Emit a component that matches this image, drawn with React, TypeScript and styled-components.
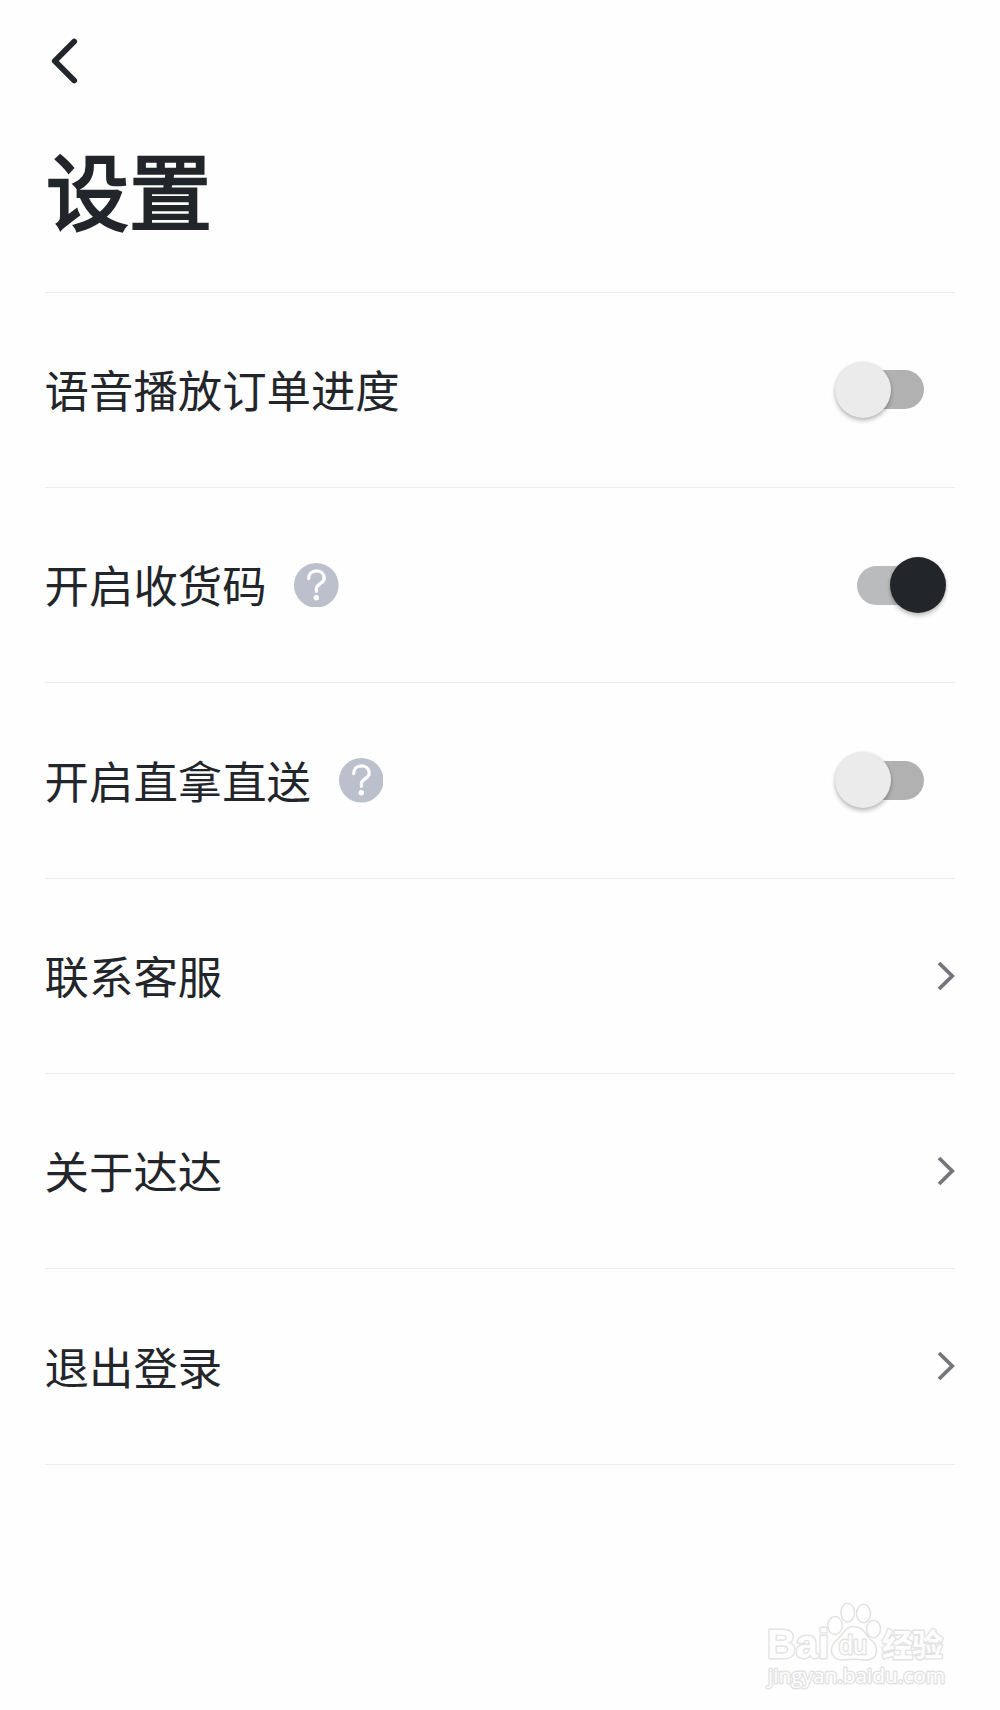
import React, { useState } from "react";
import styled, { createGlobalStyle } from "styled-components";

const GlobalStyle = createGlobalStyle`
  * { box-sizing: border-box; }
  body {
    margin: 0;
    background: #fefefe;
    color: #22252a;
    font-family: "Noto Sans CJK SC", sans-serif;
  }
`;

const Screen = styled.div`
  display: flex;
  flex-direction: column;
  width: 1000px;
  height: 1710px;
  padding: 0 44.6px 0 44.6px;
  overflow: hidden;
`;

const NavBar = styled.header`
  display: flex;
  align-items: center;
  height: 122px;
`;

const BackButton = styled.button`
  display: flex;
  padding: 0 0 0 5.2px;
  border: 0;
  background: none;
`;

const Title = styled.h1`
  margin: 0;
  height: 169.6px;
  padding: 6px 0 0 1.4px;
  font-size: 83px;
  line-height: 120px;
  font-weight: 400;
  -webkit-text-stroke: 2.5px #22252a;
`;

const List = styled.ul`
  list-style: none;
  margin: 0;
  padding: 0;
  border-top: 1px solid #ebebec;
`;

const Row = styled.li`
  display: flex;
  align-items: center;
  height: 195.35px;
  border-bottom: 1px solid #ebebec;
`;

const Label = styled.span`
  padding-bottom: 1.6px;
  font-size: 44.4px;
  line-height: 64px;
`;

const HelpIcon = styled.svg`
  margin-left: 27.6px;
`;

const Trailing = styled.div`
  display: flex;
  margin-left: auto;
`;

const Switch = styled.button`
  display: flex;
  align-items: center;
  justify-content: center;
  position: relative;
  width: 111px;
  height: 56px;
  margin-right: 9.2px;
  padding: 0;
  border: 0;
  background: none;
`;

const Track = styled.span<{ $on: boolean }>`
  width: 67px;
  height: 39px;
  border-radius: 20px;
  background: ${(p) => (p.$on ? "#babbbc" : "#b1b1b1")};
`;

const Knob = styled.span<{ $on: boolean }>`
  position: absolute;
  top: 0;
  left: ${(p) => (p.$on ? "55px" : "0")};
  width: 56px;
  height: 56px;
  border-radius: 50%;
  background: ${(p) => (p.$on ? "#22252a" : "#ebebeb")};
  box-shadow: 0 3px 4px rgba(0, 0, 0, 0.24), 0 0 3px rgba(0, 0, 0, 0.1);
`;

const Footer = styled.footer`
  display: flex;
  justify-content: flex-end;
  margin-top: auto;
`;

const Watermark = styled.svg`
  margin-right: 5.4px;
  fill: #fefefe;
  stroke: #e2e2e2;
  stroke-width: 1.5;
`;

const MarkText = styled.text`
  paint-order: stroke;
  stroke: #e3e3e3;
  stroke-width: 2.8px;
  stroke-linejoin: round;
`;

function Toggle({ initial }: { initial: boolean }) {
  const [on, setOn] = useState(initial);
  return (
    <Switch role="switch" aria-checked={on} onClick={() => setOn(!on)}>
      <Track $on={on} />
      <Knob $on={on} />
    </Switch>
  );
}

function Help() {
  return (
    <HelpIcon width="44.6" height="44.6" viewBox="0 0 44.6 44.6" fill="none">
      <circle cx="22.3" cy="22.3" r="22.3" fill="#bbc0cc" />
      <path
        d="M14.7 15.6C14.7 11 18 7.8 22.5 7.8S30.2 11 30.2 15.4C30.2 20.6 22.4 20.6 22.4 25.6V28.3"
        stroke="#fff"
        strokeWidth="3.2"
        strokeLinecap="round"
      />
      <circle cx="22.3" cy="34.8" r="2.7" fill="#fff" />
    </HelpIcon>
  );
}

function Chevron() {
  return (
    <svg width="20" height="32" viewBox="0 0 20 32" fill="none">
      <path d="M4 3L17.2 16L4 29" stroke="#74767b" strokeWidth="3.8" />
    </svg>
  );
}

interface Item {
  label: string;
  help?: boolean;
  on?: boolean;
}

const items: Item[] = [
  { label: "语音播放订单进度", on: false },
  { label: "开启收货码", help: true, on: true },
  { label: "开启直拿直送", help: true, on: false },
  { label: "联系客服" },
  { label: "关于达达" },
  { label: "退出登录" },
];

export default function App() {
  return (
    <>
      <GlobalStyle />
      <Screen>
        <NavBar>
          <BackButton aria-label="返回">
            <svg width="30" height="50" viewBox="0 0 30 50" fill="none">
              <path
                d="M24.2 5.5L4.8 25L24.2 44.5"
                stroke="#22252a"
                strokeWidth="5.8"
                strokeLinecap="round"
                strokeLinejoin="round"
              />
            </svg>
          </BackButton>
        </NavBar>
        <Title>设置</Title>
        <List>
          {items.map((item) => (
            <Row key={item.label}>
              <Label>{item.label}</Label>
              {item.help && <Help />}
              <Trailing>
                {item.on === undefined ? <Chevron /> : <Toggle initial={item.on} />}
              </Trailing>
            </Row>
          ))}
        </List>
        <Footer>
          <Watermark width="200" height="120" viewBox="750 1590 200 120">
            <MarkText x="767" y="1658" fontFamily="Liberation Sans" fontWeight="700" fontSize="40" textLength="62" lengthAdjust="spacingAndGlyphs">Bai</MarkText>
            <ellipse cx="835" cy="1625.5" rx="7.2" ry="9" />
            <ellipse cx="847.7" cy="1612.5" rx="6.8" ry="9.3" />
            <ellipse cx="863.5" cy="1613.5" rx="7" ry="9.2" />
            <ellipse cx="873.5" cy="1629" rx="7" ry="8.7" />
            <path d="M854 1626.5C863 1626.5 865 1634 870 1639C875 1643 877 1646 876.5 1651C876 1658 871 1660.5 864 1660C857 1659 850 1659 843 1660C836 1660.5 831 1656 831.5 1649C832 1643 836 1641 839 1638C844 1632 846 1626.5 854 1626.5Z" />
            <MarkText x="839" y="1653.5" fontFamily="Liberation Sans" fontSize="25" textLength="28" lengthAdjust="spacingAndGlyphs">du</MarkText>
            <MarkText x="882" y="1655.5" fontFamily="Noto Sans CJK SC" fontWeight="700" fontSize="31" textLength="61">经验</MarkText>
            <MarkText x="768" y="1682.5" fontFamily="Open Sans" fontSize="20.5" textLength="177" lengthAdjust="spacingAndGlyphs">jingyan.baidu.com</MarkText>
          </Watermark>
        </Footer>
      </Screen>
    </>
  );
}
